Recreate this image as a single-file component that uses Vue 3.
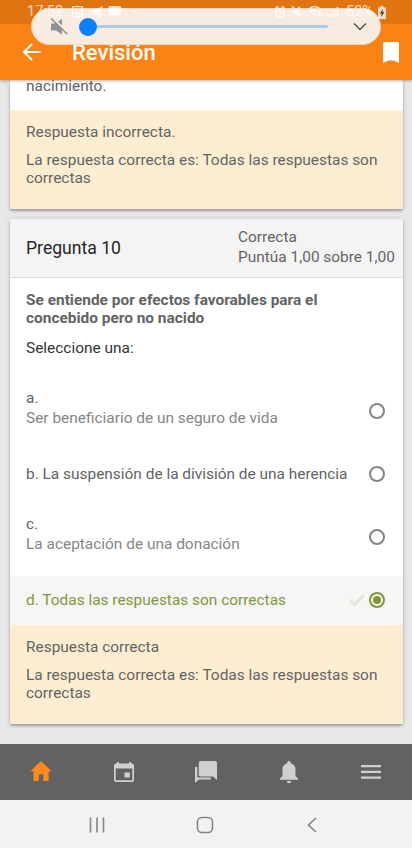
<script setup>
const options = [
  { letter: 'a.', text: 'Ser beneficiario de un seguro de vida', split: true },
  { letter: 'b.', text: 'La suspensión de la división de una herencia' },
  { letter: 'c.', text: 'La aceptación de una donación', split: true },
  { letter: 'd.', text: 'Todas las respuestas son correctas', selected: true },
]
</script>

<template>
  <div class="screen">
    <header class="top">
      <div class="status-shade"></div>
      <div class="toolbar">
        <svg class="back" width="20" height="20" viewBox="0 0 20 20" fill="none" stroke="#fff" stroke-width="2.1"><path d="M18.5 10H2.5M10 2L2 10l8 8" /></svg>
        <h1>Revisión</h1>
        <svg class="bookmark" width="16" height="21" viewBox="0 0 16 21"><path d="M1.5 0h13A1.5 1.5 0 0 1 16 1.500V21Q8 15.500 0 21V1.500A1.500 1.500 0 0 1 1.500 0z" fill="#fff" /></svg>
      </div>
      <div class="volume">
        <svg class="mute" width="18" height="18" viewBox="0 0 18 18"><path d="M1 5.500h4.500L12 1v15.500L6 12.500H1z" fill="#919191" /><path d="M1.500 -1.200L18.500 15.300" stroke="#f8ece1" stroke-width="2.200" /><path d="M1 .5l16 15.500" stroke="#919191" stroke-width="1.700" /></svg>
        <div class="track"><i></i></div>
        <svg class="chev" width="14" height="9" viewBox="0 0 14 9" fill="none" stroke="#555" stroke-width="1.500"><path d="M1 1.500l6 6 6-6" /></svg>
      </div>
      <div class="status">
        <span class="clock">17:52</span>
        <svg class="notif" width="70" height="14" viewBox="0 0 70 14" fill="#fff">
          <path fill-rule="evenodd" d="M1 1h11v11H1zM2.300 2.300v8.400h8.400V2.300zM3 9.500l2.200-3 1.600 2 1.400-1.500 2 2.500z" />
          <path d="M19 7L32 1l-2.500 11.500-4-3-2 2.200-.5-3.700z" />
          <path d="M38.500 1h10.500a1 1 0 0 1 1 1v7a1 1 0 0 1-1 1h-5l-3.500 3v-3h-2a1 1 0 0 1-1-1V2a1 1 0 0 1 1-1z" />
          <circle cx="63.500" cy="6" r="1.300" />
        </svg>
        <svg class="signals" width="68" height="14" viewBox="0 0 68 14" fill="none" stroke="#fff" stroke-width="1.600">
          <circle cx="6" cy="7.500" r="4.200" /><path d="M6 5v3h2M1 4l3-3M8 1l3 3M2.500 12.500l1.300-1.300M9.500 12.500l-1.300-1.300" />
          <path d="M18 5h3l5-4v11l-5-4h-3z" fill="#fff" stroke="none" /><path d="M18 1l10 11" />
          <path d="M34 4.500q6.500-6 13 0M36.500 7.200q4-3.600 8 0M39 10q1.500-1.500 3 0M45.500 7v5M48 7v5" />
          <path d="M54.500 12v-2M57.500 12V8M60.500 12V5M63.500 12V2" />
        </svg>
        <span class="percent">52%</span>
        <svg class="battery" width="8" height="13" viewBox="0 0 8 13"><path d="M2.500 0h3v1.500H8V13H0V1.500h2.500z" fill="#fff" /><path d="M5.200 3L1.700 7.500h2L3 11l3.500-4.700h-2z" fill="#222" /></svg>
      </div>
    </header>

    <main class="content">
      <section class="card previous">
        <p class="tail">nacimiento.</p>
        <div class="feedback">
          <p>Respuesta incorrecta.</p>
          <p>La respuesta correcta es: Todas las respuestas son correctas</p>
        </div>
      </section>

      <section class="card">
        <div class="card-head">
          <h2>Pregunta 10</h2>
          <div class="grade"><span>Correcta</span><span class="points">Puntúa 1,00 sobre 1,00</span></div>
        </div>
        <div class="question">
          <p class="prompt">Se entiende por efectos favorables para el concebido pero no nacido</p>
          <p class="select">Seleccione una:</p>
        </div>
        <div v-for="o in options" :key="o.letter" class="option" :class="{ split: o.split, selected: o.selected }">
          <div v-if="o.split" class="label"><span>{{ o.letter }}</span><span class="sub">{{ o.text }}</span></div>
          <div v-else class="label">{{ o.letter }} {{ o.text }}</div>
          <svg v-if="o.selected" class="check" width="16" height="13" viewBox="0 0 16 13" fill="none" stroke="#e7e6dd" stroke-width="3.600"><path d="M1.300 6.200l4.200 4.200L14.500 1.500" /></svg>
          <i class="radio"></i>
        </div>
        <div class="feedback">
          <p>Respuesta correcta</p>
          <p>La respuesta correcta es: Todas las respuestas son correctas</p>
        </div>
      </section>
    </main>

    <nav class="tabs">
      <div class="tab"><svg width="22" height="22" viewBox="0 0 22 22" fill="#ff8a1c"><path d="M11 0L.5 10.300h3V20h5.300v-6.700h4.500V20h5.300v-9.700h3z" /></svg></div>
      <div class="tab"><svg width="22" height="22" viewBox="0 0 22 22" fill="#d0d0d0"><path fill-rule="evenodd" d="M4 1h2v1.500h10V1h2v1.500h1A2 2 0 0 1 21 4.500V19a2 2 0 0 1-2 2H3a2 2 0 0 1-2-2V4.500a2 2 0 0 1 2-2h1zM2.700 7.500v11.800h16.600V7.500zM11.500 11.500h5.300v5h-5.300z" /></svg></div>
      <div class="tab"><svg width="24" height="24" viewBox="0 0 24 24" fill="#d0d0d0"><path d="M6.500 1H21a2 2 0 0 1 2 2v17l-4-3.500H6.500a1.700 1.700 0 0 1-1.700-1.700V2.700A1.700 1.700 0 0 1 6.500 1z" /><path d="M1 7h2.300v10.500h13.500v2H5L1 23z" /></svg></div>
      <div class="tab"><svg width="20" height="24" viewBox="0 0 20 24" fill="#d0d0d0"><path d="M10 1a1.800 1.800 0 0 1 1.800 1.800v.5A6.500 6.500 0 0 1 16.500 9.500v6.500l2.500 2.500v1.300H1v-1.300L3.500 16V9.500a6.500 6.500 0 0 1 4.700-6.200v-.5A1.800 1.800 0 0 1 10 1zM7.800 21h4.400a2.200 2.200 0 0 1-4.400 0z" /></svg></div>
      <div class="tab"><svg width="20" height="14" viewBox="0 0 20 14" fill="#d0d0d0"><path d="M0 0h20v2.200H0zM0 5.800h20V8H0zM0 11.500h20v2.200H0z" /></svg></div>
    </nav>
    <footer class="system">
      <svg width="16" height="16" viewBox="0 0 16 16" stroke="#858585" stroke-width="1.600"><path d="M1.500 .5v15M8 .5v15M14.500 .5v15" /></svg>
      <svg class="home-key" width="18" height="18" viewBox="0 0 18 18" fill="none" stroke="#858585" stroke-width="1.600"><rect x="1.500" y="1.500" width="15" height="15" rx="4.500" /></svg>
      <svg width="10" height="16" viewBox="0 0 10 16" fill="none" stroke="#858585" stroke-width="1.600"><path d="M9 1L1.500 8 9 15" /></svg>
    </footer>
  </div>
</template>

<style>
body { background: #e8e8e8; }
</style>

<style scoped>
* { box-sizing: border-box; margin: 0; }
svg { display: block; flex: none; }
.screen { width: 412px; height: 848px; display: flex; flex-direction: column; overflow: hidden; background: #e8e8e8; font-family: Roboto, sans-serif; font-size: 15.43px; line-height: 18px; color: #636363; }
.top { position: relative; z-index: 2; height: 80px; flex: none; background: #fb8214; box-shadow: 0 1px 3px rgba(0, 0, 0, .3); }
.status-shade { height: 24px; background: #df7411; }
.toolbar { height: 56px; display: flex; align-items: center; padding: 0 13px 0 22px; color: #fff; }
.toolbar h1 { margin-left: 30px; padding-top: 2px; flex: 1; font-size: 22px; font-weight: 500; line-height: 24px; }
.volume { position: absolute; left: 31px; top: 8px; width: 350px; height: 37px; border-radius: 19px; background: #f8ece1; border: 1px solid #f6d6b7; display: flex; align-items: center; padding: 0 13px 0 18px; }
.track { margin-left: 20px; width: 240px; height: 3px; border-radius: 2px; background: #adcbe8; display: flex; align-items: center; }
.track i { width: 18px; height: 18px; margin-left: -9px; border-radius: 50%; background: #0a80fb; flex: none; }
.chev { margin-left: auto; }
.status { position: absolute; inset: 0 0 auto; height: 24px; display: flex; align-items: center; padding-left: 27px; color: #fff; opacity: .75; font-size: 14.5px; }
.clock { width: 36px; }
.notif { margin-left: 8px; }
.signals { margin-left: 133px; }
.percent { margin-left: 4px; width: 28px; }
.battery { margin-left: 4px; }
.content { flex: 1; min-height: 0; padding: 0 9px 0 10px; display: flex; flex-direction: column; gap: 10px; }
.card { background: #fff; border-radius: 2px; box-shadow: 0 2px 2px rgba(0, 0, 0, .2), 0 1px 5px rgba(0, 0, 0, .2); flex: none; }
.tail { height: 30px; padding: 0 16px; line-height: 12px; }
.previous { display: flex; flex-direction: column; }
.feedback { background: #feeed1; padding: 13px 16px 22px; height: 99px; display: flex; flex-direction: column; gap: 10px; border-radius: 0 0 2px 2px; }
.card-head { height: 59px; background: #f4f4f4; border-bottom: 1px solid #dedede; display: flex; align-items: center; padding: 0 0 2px 16px; border-radius: 2px 2px 0 0; }
.card-head h2 { width: 212px; padding-top: 2px; color: #252525; font-size: 17.6px; font-weight: 400; line-height: 20px; }
.grade { display: flex; flex-direction: column; line-height: 20px; white-space: nowrap; }
.question { height: 101px; padding: 13px 16px 0; display: flex; flex-direction: column; gap: 12px; }
.prompt { font-weight: 700; max-width: 350px; }
.select { color: #333; }
.option { height: 63px; display: flex; align-items: center; padding: 0 18px 0 16px; }
.label { flex: 1; white-space: nowrap; }
.split .label { display: flex; flex-direction: column; line-height: 20px; padding-bottom: 6px; }
.sub { color: #858585; }
.radio { width: 16px; height: 16px; border: 2px solid #858585; border-radius: 50%; display: flex; align-items: center; justify-content: center; }
.selected { margin-top: 8px; height: 49px; background: #f6f6f4; color: #80983c; padding-bottom: 1px; }
.selected .radio { border-color: #80983c; }
.selected .radio::after { content: ""; width: 8px; height: 8px; border-radius: 50%; background: #80983c; }
.check { margin-right: 4px; }
.tabs { height: 56px; flex: none; background: #626262; display: grid; grid-template-columns: repeat(5, 1fr); }
.tab { display: grid; place-items: center; }
.tab:nth-child(n + 4) { padding-left: 1px; }
.system { height: 48px; flex: none; background: #f2f2f2; display: flex; align-items: center; padding: 2px 95px 0 89px; justify-content: space-between; }
.home-key { margin-right: 3px; }
</style>
